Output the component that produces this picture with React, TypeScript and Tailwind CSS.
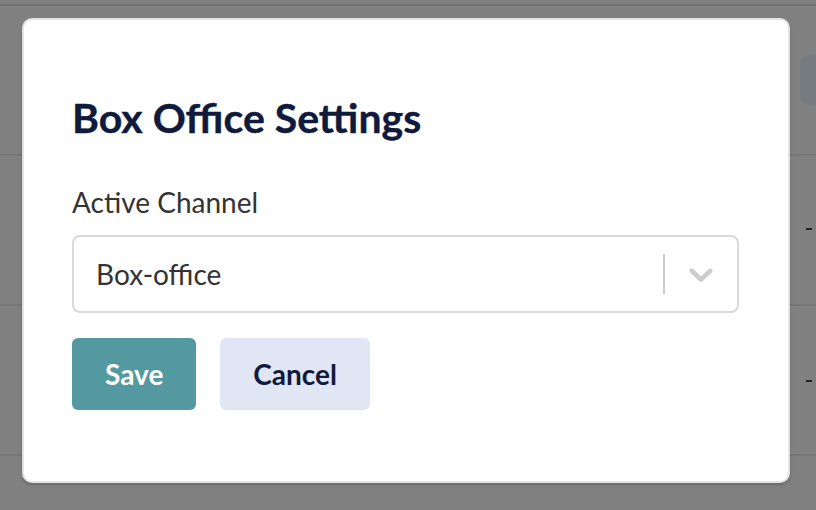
import React from 'react';

// Chevron used by the select's dropdown indicator
const ChevronDown = () => (
    <svg viewBox="0 0 20 20" width={40} height={40} aria-hidden="true" className="fill-[#cccccc]">
        <path d="M4.516 7.548c0.436-0.446 1.043-0.481 1.576 0l3.908 3.747 3.908-3.747c0.533-0.481 1.141-0.446 1.574 0 0.436 0.445 0.408 1.197 0 1.615-0.406 0.418-4.695 4.502-4.695 4.502-0.217 0.223-0.502 0.335-0.787 0.335s-0.57-0.112-0.789-0.335c0 0-4.287-4.084-4.695-4.502s-0.436-1.17 0-1.615z" />
    </svg>
);

// Dimmed table rows behind the modal
const BackgroundRow = ({ children }: { children?: React.ReactNode }) => (
    <div className="h-[150px] border-b-2 border-[#767676] flex items-center justify-end pr-[4px]">
        {children}
    </div>
);

export default function App() {
    return (
        <div className="relative w-[816px] h-[510px] overflow-hidden bg-[#808080] font-[Lato,sans-serif]">
            {/* page behind the overlay */}
            <div className="flex flex-col">
                <div className="h-[6px] border-b-2 border-[#707070]" />
                <div className="h-[150px] border-b-2 border-[#767676] flex items-start justify-end pt-[49px]">
                    <div className="w-[16px] h-[50px] rounded-l-[10px] bg-[#767b82]" />
                </div>
                <BackgroundRow>
                    <span className="w-[6px] h-[2px] bg-[#222] mb-[2px]" />
                </BackgroundRow>
                <BackgroundRow>
                    <span className="w-[6px] h-[2px] bg-[#222] mt-[2px]" />
                </BackgroundRow>
            </div>

            {/* modal */}
            <div className="absolute left-[22px] top-[18px] w-[768px] h-[465px] bg-white rounded-[10px] border-2 border-[#e3e3e3] shadow-[0_2px_3px_rgba(0,0,0,0.18)] pl-[48px] pr-[50px] pt-[74px]">
                <h2 className="text-[41px] leading-[48px] font-bold text-[#101a3d] [-webkit-text-stroke:0.4px_#101a3d]">Box Office Settings</h2>

                <label className="block mt-[44px] text-[28px] leading-[32px] text-[#333333]">Active Channel</label>

                <div className="mt-[17px] w-[667px] h-[78px] rounded-[8px] border-2 border-[#d9d9d9] bg-white flex items-center">
                    <div className="flex-1 pl-[22px] text-[28px] leading-[32px] text-[#333333]">Box-office</div>
                    <div className="flex items-center self-stretch">
                        <span className="w-[2px] h-[40px] bg-[#cccccc]" />
                        <span className="px-[16px] flex items-center">
                            <ChevronDown />
                        </span>
                    </div>
                </div>

                <div className="mt-[25px] flex gap-[24px]">
                    <button className="h-[72px] px-[33px] rounded-[6px] bg-[#54999f] text-white text-[28px] font-bold">Save</button>
                    <button className="h-[72px] px-[33px] rounded-[6px] bg-[#e1e6f4] text-[#101a3d] text-[28px] font-bold">Cancel</button>
                </div>
            </div>
        </div>
    );
}
